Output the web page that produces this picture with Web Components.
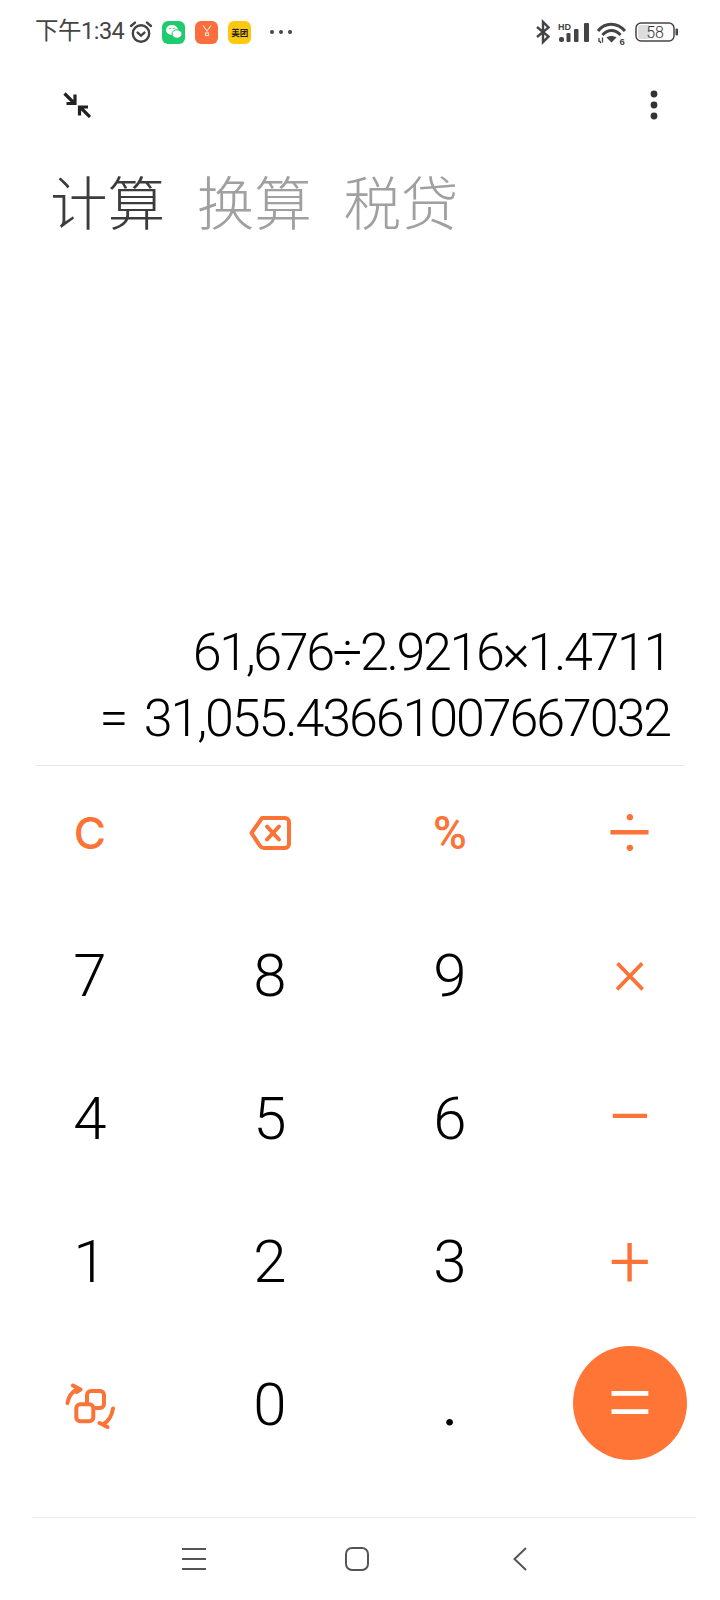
<!doctype html>
<html lang="zh">
<head>
<meta charset="utf-8">
<style>
  html, body { margin: 0; background: #fff; }
  body { font-family: Roboto, "Noto Sans CJK SC", sans-serif; }
</style>
</head>
<body>
<calc-app></calc-app>
<script>
class CalcStatus extends HTMLElement {
  constructor() {
    super();
    this.attachShadow({ mode: "open" });
    this.shadowRoot.innerHTML = `
      <style>
        :host {
          display: flex;
          align-items: center;
          height: 64px;
          padding: 0 42px 0 35px;
          color: #444;
        }
        .time { font: 400 23.500px/1 Roboto, "Noto Sans CJK SC", sans-serif; letter-spacing: -0.5px; }
        .left, .right { display: flex; align-items: center; }
        .right { margin-left: auto; }
        svg { display: block; overflow: visible; }
        .app { width: 23px; height: 23px; border-radius: 6px; margin-left: 10px; display: flex; align-items: center; justify-content: center; }
        .mt { background: #fdc90f; color: #222; font: 700 8.500px/1 "Noto Sans CJK SC", sans-serif; }
        .more { margin-left: 18px; }
      </style>
      <div class="left">
        <span class="time">下午1:34</span>
        <svg width="24" height="24" viewBox="0 0 24 24" style="margin-left:5px" fill="none" stroke="#444" stroke-width="2.400" stroke-linecap="round">
          <circle cx="12" cy="13.500" r="8.200"/><path d="M8.600 12.600 12 15.600l3.400-3M2 6 6 2.600M22 6l-4-3.400"/>
        </svg>
        <span class="app" style="background:#1ecb6e;margin-left:9px">
          <svg width="18" height="16" viewBox="0 0 18 16" fill="#fff">
            <ellipse cx="7" cy="6" rx="6" ry="5"/><ellipse cx="12" cy="10" rx="5" ry="4.200" stroke="#1ecb6e"/>
            <circle cx="5" cy="4.500" r=".8" fill="#1ecb6e"/><circle cx="9" cy="4.500" r=".8" fill="#1ecb6e"/>
          </svg>
        </span>
        <span class="app" style="background:#fb6d3c">
          <svg width="16" height="16" viewBox="0 0 16 16" fill="none" stroke="#ffe0d2" stroke-width="1.200"><path d="M4 1.500 8 7l4-5.500"/><rect x="6.500" y="9" width="3" height="2.500"/></svg>
        </span>
        <span class="app mt">美团</span>
        <svg class="more" width="24" height="6" viewBox="0 0 24 6" fill="#444"><circle cx="3" cy="3" r="2"/><circle cx="12" cy="3" r="2"/><circle cx="21" cy="3" r="2"/></svg>
      </div>
      <div class="right">
        <svg width="14" height="24" viewBox="0 0 14 24" fill="none" stroke="#444" stroke-width="2.400"><path d="M1 7 12.500 16.500 7 22V2l5.500 5.500L1 17"/></svg>
        <svg width="31" height="22" viewBox="0 0 31 22" style="margin-left:8px" fill="#444">
          <rect x="1" y="16" width="5" height="5" rx="2"/><rect x="8.500" y="12" width="4" height="9" rx="1"/><rect x="16" y="8" width="4.500" height="13" rx="1"/><rect x="26" y="2" width="5" height="19" rx="1"/>
          <text x="0" y="8.500" font-family="Liberation Sans" font-weight="700" font-size="9">HD</text>
        </svg>
        <svg width="29" height="26" viewBox="0 0 29 26" style="margin-left:8px" fill="none" stroke="#444" stroke-width="3">
          <path d="M1 12C8 3 20 3 28 12M5.500 16c5.500-6 12.500-6 18 0"/>
          <path d="M9.500 18.500l5 5 5-5c-3-2-7-2-10 0z" fill="#444" stroke="none"/>
          <path d="M2 19v4M4 24l-1.500-2M5.500 18.500v5" stroke-width="1.300"/>
          <text x="22.500" y="25.500" font-family="Liberation Sans" font-weight="700" font-size="9.500" fill="#444" stroke="none">6</text>
        </svg>
        <svg width="43" height="20" viewBox="0 0 43 20" style="margin-left:9px" fill="none">
          <rect x="1" y="1" width="38" height="18" rx="5" stroke="#444" stroke-width="1.500"/>
          <rect x="3" y="3" width="12" height="14" rx="2.500" fill="#ddd"/>
          <rect x="40.500" y="6.500" width="2.500" height="7" rx="1" fill="#444"/>
          <text x="20" y="15.500" text-anchor="middle" font-family="Roboto" font-size="16" font-weight="300" fill="#333">58</text>
        </svg>
      </div>
    `;
  }
}
customElements.define("calc-status", CalcStatus);

class CalcToolbar extends HTMLElement {
  constructor() {
    super();
    this.attachShadow({ mode: "open" });
    this.shadowRoot.innerHTML = `
      <style>
        :host {
          display: flex;
          justify-content: space-between;
          align-items: center;
          height: 50px;
          padding: 16px 62px 0 63px;
        }
        svg { display: block; }
      </style>
      <svg width="28" height="26" viewBox="0 0 28 26" fill="none" stroke="#222" stroke-width="3.200">
        <path d="M1.500 1.500 11 11M12 2.500v9H3.500M27 25 17.500 15.500M16.500 23.500v-8.500H25"/>
      </svg>
      <svg width="8" height="30" viewBox="0 0 8 30" fill="#333"><circle cx="4" cy="4" r="3.400"/><circle cx="4" cy="15" r="3.400"/><circle cx="4" cy="26" r="3.400"/></svg>
    `;
  }
}
customElements.define("calc-toolbar", CalcToolbar);

class CalcTabs extends HTMLElement {
  constructor() {
    super();
    this.attachShadow({ mode: "open" });
    this.shadowRoot.innerHTML = `
      <style>
        :host {
          display: flex;
          gap: 31.500px;
          padding: 34px 0 0 50px;
          font: 300 57.600px/72px "Noto Sans CJK SC", sans-serif;
          color: #a0a0a0;
        }
        .on { color: #3c3c3c; }
      </style>
      <span class="on">计算</span><span>换算</span><span>税贷</span>
    `;
  }
}
customElements.define("calc-tabs", CalcTabs);

class CalcDisplay extends HTMLElement {
  constructor() {
    super();
    this.attachShadow({ mode: "open" });
    this.shadowRoot.innerHTML = `
      <style>
        :host {
          display: block;
          height: 530px;
          box-sizing: border-box;
          margin: 0 36px;
          border-bottom: 1px solid #e6e6e6;
        }
        .wrap {
          height: 100%;
          display: flex;
          flex-direction: column;
          justify-content: flex-end;
          align-items: flex-end;
          padding: 0 14px 13px 0;
          box-sizing: border-box;
          font: 300 52px/66px Roboto, sans-serif;
          letter-spacing: -2.100px;
          color: #000;
          white-space: nowrap;
        }
        .expr { letter-spacing: -2.350px; }
        .result { word-spacing: 7px; }
      </style>
      <div class="wrap">
        <div class="expr"><slot name="expr"></slot></div>
        <div class="result"><slot name="result"></slot></div>
      </div>
    `;
  }
}
customElements.define("calc-display", CalcDisplay);

class CalcKey extends HTMLElement {
  constructor() {
    super();
    this.attachShadow({ mode: "open" });
    this.shadowRoot.innerHTML = `
      <style>
        :host {
          display: flex;
          box-sizing: border-box;
          align-items: center;
          justify-content: center;
          height: 143px;
          font: 300 60px/1 Roboto, sans-serif;
          color: #000;
        }
        :host([op]) { color: #fb7336; font-size: 78px; font-weight: 350; }
        :host([glyph]) { font-size: 46px; font-weight: 500; }
        :host([eq]) { color: #fff; font-size: 90px; font-weight: 300; }
        .eq {
          display: contents;
        }
        :host([eq]) .eq {
          display: flex;
          align-items: center;
          justify-content: center;
          width: 114px;
          height: 114px;
          margin-top: -4px;
          border-radius: 50%;
          background: #ff7536;
        }
      </style>
      <span class="eq"><slot></slot></span>
    `;
  }
}
customElements.define("calc-key", CalcKey);

class CalcKeypad extends HTMLElement {
  constructor() {
    super();
    this.attachShadow({ mode: "open" });
    this.shadowRoot.innerHTML = `
      <style>
        :host {
          display: grid;
          grid-template-columns: repeat(4, 180px);
          margin: -5px 0 41px;
        }
        svg { display: block; }
      </style>
      <calc-key op glyph style="font-family:Inter,sans-serif;font-size:44px">C</calc-key>
      <calc-key op>
        <svg width="42" height="34" viewBox="0 0 42 34" fill="none" stroke="#fb7336" stroke-width="4" stroke-linejoin="round" stroke-linecap="round">
          <path d="M13 2h23a4 4 0 0 1 4 4v22a4 4 0 0 1-4 4H15a5 5 0 0 1-4-2.200L2.500 17z"/><path d="M18 10.500l12 13M30 10.500l-12 13"/>
        </svg>
      </calc-key>
      <calc-key op glyph>%</calc-key>
      <calc-key op>÷</calc-key>
      <calc-key>7</calc-key><calc-key>8</calc-key><calc-key>9</calc-key><calc-key op style="font-size:66px;padding-bottom:8px">×</calc-key>
      <calc-key>4</calc-key><calc-key>5</calc-key><calc-key>6</calc-key><calc-key op style="font-size:84px;padding-bottom:2px">−</calc-key>
      <calc-key>1</calc-key><calc-key>2</calc-key><calc-key>3</calc-key><calc-key op style="font-size:74px">+</calc-key>
      <calc-key op>
        <svg width="50" height="50" viewBox="0 0 50 50" fill="none" stroke="#fb7336" stroke-width="4" stroke-linecap="round" stroke-linejoin="round">
          <rect x="22" y="11" width="17" height="17" rx="4"/><rect x="11.300" y="24.300" width="17" height="17" rx="4" fill="#fff"/>
          <path d="M2.500 23C3.500 17 6 12.500 11.500 9.500M8 5.500l7.500 4-4 2.500M48 28.500C47 35 44 41 38 44.500M34.500 43l8 4"/>
        </svg>
      </calc-key>
      <calc-key>0</calc-key><calc-key style="font-weight:400">.</calc-key><calc-key eq>=</calc-key>
    `;
  }
}
customElements.define("calc-keypad", CalcKeypad);

class CalcNav extends HTMLElement {
  constructor() {
    super();
    this.attachShadow({ mode: "open" });
    this.shadowRoot.innerHTML = `
      <style>
        :host {
          display: block;
          margin: 0 24px 0 32px;
          border-top: 1px solid #ebebeb;
          height: 82px;
        }
        .row {
          display: grid;
          grid-template-columns: repeat(3, 163px);
          justify-items: center;
          align-items: center;
          height: 82px;
          padding-left: 80.500px;
        }
        svg { display: block; }
      </style>
      <div class="row">
        <svg width="24" height="24" viewBox="0 0 24 24" fill="none" stroke="#555" stroke-width="2"><path d="M0 2h24M0 12h24M0 22h24"/></svg>
        <svg width="24" height="24" viewBox="0 0 24 24" fill="none" stroke="#555" stroke-width="2"><rect x="1" y="1" width="22" height="22" rx="6"/></svg>
        <svg width="14" height="24" viewBox="0 0 14 24" fill="none" stroke="#555" stroke-width="2"><path d="M13 1 1.500 12 13 23"/></svg>
      </div>
    `;
  }
}
customElements.define("calc-nav", CalcNav);

class CalcApp extends HTMLElement {
  constructor() {
    super();
    this.attachShadow({ mode: "open" });
    this.shadowRoot.innerHTML = `
      <style>
        :host { display: block; width: 720px; height: 1600px; overflow: hidden; background: #fff; }
      </style>
      <calc-status></calc-status>
      <calc-toolbar></calc-toolbar>
      <calc-tabs></calc-tabs>
      <calc-display>
        <span slot="expr">61,676÷2.9216×1.4711</span>
        <span slot="result">= 31,055.43661007667032</span>
      </calc-display>
      <calc-keypad></calc-keypad>
      <calc-nav></calc-nav>
    `;
  }
}
customElements.define("calc-app", CalcApp);
</script>
</body>
</html>
